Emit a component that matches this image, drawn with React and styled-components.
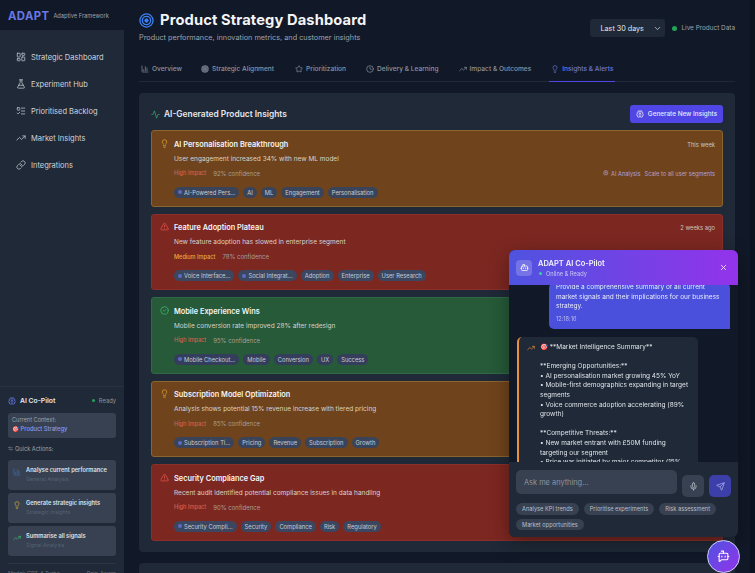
import React from 'react';
import styled, { createGlobalStyle } from 'styled-components';
import {
  LayoutDashboard, FlaskConical, ListTodo, TrendingUp, Link, Brain, ChartColumn, Star, Clock,
  Lightbulb, Activity, TriangleAlert, CircleCheck, Bot, X, Mic, Send, BotMessageSquare, ArrowLeftRight, ChevronDown,
} from 'lucide-react';

const Global = createGlobalStyle`
  html, body { margin: 0; padding: 0; background: #111827; }
  * { box-sizing: border-box; }
  #root { font-family: Inter, "Noto Sans", sans-serif; }
`;

const Page = styled.div`
  width: 755px; height: 573px; overflow: hidden; display: flex; background: #111827; color: #e5e7eb;
`;
const Sidebar = styled.aside`
  width: 124px; flex: none; display: flex; flex-direction: column; background: #1f2937; height: 573px; overflow: hidden;
`;
const Brand = styled.div`
  height: 30px; flex: none; background: #111827; display: flex; align-items: center; gap: 4px; padding: 1px 8px 0 8px;
`;
const Logo = styled.span`
  font-size: 11.3px; font-weight: 700; color: #6878e6; letter-spacing: .4px;
`;
const BrandSub = styled.span`font-size: 5.7px; color: #9ca3af;`;
const Nav = styled.nav`
  display: flex; flex-direction: column; padding: 13.5px 0 0 16px; height: 356px; flex: none;
`;
const NavItem = styled.div`
  height: 27px; display: flex; align-items: center; gap: 5px; font-size: 7.5px; color: #d1d5db;
  svg { width: 10px; height: 10px; color: #b6bcc6; flex: none; }
`;
const Copilot = styled.div`
  border-top: 1px solid #27323f; padding: 8px 8px 0; display: flex; flex-direction: column; margin-top: 0;
`;
const CopilotHead = styled.div`
  display: flex; align-items: center; justify-content: space-between; height: 11px; padding-right: 0;
`;
const CopilotTitle = styled.div`
  display: flex; align-items: center; gap: 4px; font-size: 6.8px; font-weight: 600; color: #e5e7eb;
  svg { width: 8px; height: 8px; color: #6878e6; }
`;
const Ready = styled.div`
  display: flex; align-items: center; gap: 4px; font-size: 5.8px; color: #8b95a3;
`;
const Dot = styled.i`
  display: block; width: ${p => p.$s || 3}px; height: ${p => p.$s || 3}px; border-radius: 50%; background: ${p => p.$c || '#22a35a'}; flex: none;
`;
const ContextBox = styled.div`
  margin-top: 7px; height: 25px; border-radius: 3px; background: #374151; padding: 4px 4px; display: flex; flex-direction: column; gap: 2px;
`;
const ContextLabel = styled.span`font-size: 5.6px; color: #9ca3af;`;
const ContextValue = styled.span`font-size: 5.8px; font-weight: 500; color: #8c9bee;`;
const QuickLabel = styled.div`
  margin-top: 6px; height: 9px; display: flex; align-items: center; gap: 2px; font-size: 5.6px; color: #9ca3af;
  svg { width: 5px; height: 5px; }
`;
const Quick = styled.div`
  margin-top: ${p => p.$first ? 7 : 3}px; height: 30px; border-radius: 3px; background: #374151; padding: 5.5px 5px; display: flex; gap: 5px;
  svg { width: 8px; height: 8px; margin-top: 2px; flex: none; color: ${p => p.$c}; }
`;
const QuickText = styled.div`display: flex; flex-direction: column; gap: 3px;`;
const QuickTitle = styled.span`font-size: 5.7px; font-weight: 600; color: #dfe3e9; white-space: nowrap;`;
const QuickSub = styled.span`font-size: 5.4px; color: #566172;`;
const ModelRow = styled.div`
  margin-top: 7px; border-top: 1px solid #2a3544; padding-top: 6px; display: flex; justify-content: space-between; font-size: 5.4px; color: #6b7280;
`;

const Main = styled.main`
  flex: 1; min-width: 0; display: flex; flex-direction: column; padding: 0 20px 0 15px; height: 573px; overflow: hidden; position: relative;
`;
const ScrollTrack = styled.div`
  position: absolute; right: 0; top: 0; bottom: 0; width: 5px; background: #0c1320;
`;
const Header = styled.header`
  display: flex; justify-content: space-between; align-items: flex-start; height: 59px; flex: none; padding-top: 11px;
`;
const TitleRow = styled.div`display: flex; align-items: center; gap: 6px; padding-left: 0; height: 19px;`;
const Title = styled.h1`margin: 0; font-size: 14.7px; font-weight: 700; color: #f3f4f6; line-height: 19px; letter-spacing: .12px;`;
const Subtitle = styled.p`margin: 3px 0 0; font-size: 7.3px; line-height: 10px; color: #9ca3af;`;
const Controls = styled.div`display: flex; align-items: center; gap: 7px; margin-top: 8px;`;
const Select = styled.div`
  width: 75px; height: 18px; border-radius: 3px; background: #1f2937; display: flex; align-items: center; justify-content: space-between;
  padding: 0 3px 0 10px; font-size: 7.2px; color: #e5e7eb;
  svg { width: 9px; height: 9px; color: #cbd5e1; }
`;
const Live = styled.div`display: flex; align-items: center; gap: 4px; font-size: 6.4px; color: #9ca3af; white-space: nowrap;`;
const Tabs = styled.div`
  display: flex; height: 23px; flex: none; border-bottom: 1px solid #1f2937; padding-left: 0;
`;
const Tab = styled.div`
  display: flex; align-items: center; gap: 3px; height: 23px; padding: 0 2px 2px 2px; margin-right: ${p => p.$mr}px; font-size: 6.6px; font-weight: 500;
  color: ${p => p.$active ? '#6c79dc' : '#8b95a3'}; white-space: nowrap;
  border-bottom: 1px solid ${p => p.$active ? '#4f46e5' : 'transparent'};
  svg { width: 8px; height: 8px; flex: none; }
`;
const Panel = styled.section`
  margin-top: 11px; height: 459px; flex: none; border-radius: 4px; background: #1f2937; padding: 12px 12px 0 12px; display: flex; flex-direction: column;
`;
const PanelHead = styled.div`
  display: flex; justify-content: space-between; align-items: center; height: 18px; margin-bottom: 7px;
`;
const PanelTitle = styled.h2`
  margin: 0; display: flex; align-items: center; gap: 4px; font-size: 8.4px; font-weight: 600; color: #e5e7eb;
  svg { width: 9px; height: 9px; color: #34a862; }
`;
const GenButton = styled.div`
  width: 93px; height: 18px; border-radius: 3px; background: #4f46e5; display: flex; align-items: center; justify-content: center; gap: 4px;
  font-size: 6.4px; font-weight: 500; color: #e8e9fb;
  svg { width: 8px; height: 8px; }
`;
const Cards = styled.div`display: flex; flex-direction: column; gap: 7px;`;
const COL = {
  orange: { bg: '#6f441c', bd: '#8a6530', ic: '#e0a030', tag: '#39445a' },
  red: { bg: '#7d2721', bd: '#8a2f29', ic: '#e4534c', tag: '#3b4660' },
  green: { bg: '#265a38', bd: '#2e6b44', ic: '#3fb970', tag: '#343e5c' },
};
const Card = styled.article`
  height: 76.5px; flex: none; border-radius: 3px; border: 1px solid ${p => COL[p.$k].bd}; background: ${p => COL[p.$k].bg};
  padding: 7.5px 7px 0 8px; display: flex; gap: 5px;
  > svg { width: 9px; height: 9px; margin-top: 0; flex: none; color: ${p => COL[p.$k].ic}; }
`;
const CardBody = styled.div`flex: 1; min-width: 0; display: flex; flex-direction: column;`;
const CardTop = styled.div`display: flex; justify-content: space-between; align-items: center; height: 11px;`;
const CardTitle = styled.h3`margin: 0; font-size: 7.37px; font-weight: 600; color: #f3f4f6; white-space: nowrap;`;
const Time = styled.span`font-size: 5.8px; color: #cbc4ba;`;
const CardDesc = styled.p`margin: 5px 0 0; font-size: 6.5px; line-height: 9px; color: #d6d3cf; white-space: nowrap;`;
const MetaRow = styled.div`display: flex; justify-content: space-between; align-items: center; margin-top: 5px; height: 9px;`;
const Meta = styled.div`display: flex; gap: 7px; font-size: 5.6px; align-items: center;`;
const Impact = styled.span`color: ${p => p.$med ? '#f0a63a' : '#d2604f'}; font-weight: 500;`;
const Conf = styled.span`color: #a59f98; font-size: 6px;`;
const Analysis = styled.div`
  display: flex; align-items: center; gap: 2px; font-size: 5.7px; color: #b49fd0;
  svg { width: 5.5px; height: 5.5px; }
  span + span { margin-left: 2px; }
`;
const TagRow = styled.div`display: flex; gap: 4px; margin-top: 9px;`;
const Tag = styled.span`
  height: 11px; border-radius: 6px; padding: 0 4px; display: flex; align-items: center; gap: 2px; font-size: 5.8px; color: #c5ccd6; white-space: nowrap;
  background: ${p => COL[p.$k].tag};
`;
const NextPanel = styled.section`margin-top: 11px; height: 40px; flex: none; border-radius: 4px; background: #1f2937;`;

const Chat = styled.aside`
  position: fixed; left: 509px; top: 250px; width: 229px; height: 287px; border-radius: 6px; overflow: hidden; display: flex; flex-direction: column;
  background: #111827; box-shadow: 0 6px 20px rgba(0,0,0,.35);
`;
const ChatHead = styled.div`
  height: 35px; flex: none; background: linear-gradient(90deg, #4f53e0, #9333ea); display: flex; align-items: center; padding: 0 10px 0 7px; gap: 6px; position: relative; z-index: 1;
`;
const BotBox = styled.div`
  width: 16px; height: 16px; border-radius: 4px; background: rgba(255,255,255,.2); display: flex; align-items: center; justify-content: center;
  svg { width: 9px; height: 9px; color: #fff; }
`;
const ChatTitles = styled.div`flex: 1; display: flex; flex-direction: column; gap: 2px;`;
const ChatTitle = styled.span`font-size: 7.5px; font-weight: 600; color: #f4f3fe;`;
const ChatState = styled.span`display: flex; align-items: center; gap: 4px; padding-left: 1px; font-size: 5.7px; color: #c9c8f2;`;
const CloseBtn = styled(X)`width: 9px; height: 9px; color: #fff;`;
const Messages = styled.div`flex: 1; min-height: 0; overflow: hidden; display: flex; flex-direction: column; padding: 0 8px;`;
const UserMsg = styled.div`
  align-self: flex-end; width: 181px; flex: none; margin-top: -2px; background: #4a50dc; border-radius: 5px 5px 0 5px; padding: 0 7px 6px; color: #e8e9fb; font-size: 6.5px; line-height: 9.7px;
`;
const MsgTime = styled.div`font-size: 5.6px; color: #b9bcf3; margin-top: 3px; line-height: 8px;`;
const AiMsg = styled.div`
  width: 181px; flex: none; margin-top: 8px; background: #1f2937; border-left: 2px solid #e8913c; border-radius: 5px; padding: 6px 8px 0 8px; display: flex; gap: 5px; height: 140px;
  > svg { width: 8px; height: 8px; color: #e8913c; flex: none; margin-top: 1px; }
`;
const AiText = styled.div`font-size: 6.5px; line-height: 9.6px; color: #dfe3e9; white-space: pre-wrap;`;
const Composer = styled.div`
  flex: none; height: 75px; background: #1f2937; padding: 8px 7px 0; display: flex; flex-direction: column; position: relative;
`;
const InputRow = styled.div`display: flex; gap: 5px; align-items: flex-start;`;
const Input = styled.div`
  width: 161px; height: 24px; border-radius: 5px; background: #374151; padding: 0 8px; display: flex; align-items: center; font-size: 7.4px; color: #8d96a3;
`;
const RoundBtn = styled.div`
  width: 22px; height: 22px; margin-top: 5px; border-radius: 5px; background: ${p => p.$primary ? '#3d3fa8' : '#374151'}; display: flex; align-items: center; justify-content: center;
  svg { width: 9px; height: 9px; color: ${p => p.$primary ? '#a8acef' : '#c3c9d2'}; }
`;
const Chips = styled.div`display: flex; flex-wrap: wrap; gap: 4px 5px; margin-top: 6px;`;
const Chip = styled.span`
  height: 11.5px; border-radius: 6px; background: #374151; padding: 0 6px; display: flex; align-items: center; font-size: 5.7px; color: #b7bec8; white-space: nowrap;
`;
const Fab = styled.div`
  position: fixed; left: 707px; top: 540px; width: 33px; height: 33px; border-radius: 50%; background: linear-gradient(135deg, #4f53e0, #9333ea);
  border: 1px solid #cfd3f7; display: flex; align-items: center; justify-content: center; z-index: 3;
  svg { width: 13px; height: 13px; color: #fff; }
`;
const TargetSvg = styled.svg`width: 15px; height: 15px; flex: none;`;
const TabDisc = styled.svg`width: 8px; height: 8px; flex: none;`;

const NAV = [
  [LayoutDashboard, 'Strategic Dashboard'], [FlaskConical, 'Experiment Hub'], [ListTodo, 'Prioritised Backlog'],
  [TrendingUp, 'Market Insights'], [Link, 'Integrations'],
];
const CARDS = [
  { k: 'orange', I: Lightbulb, t: 'AI Personalisation Breakthrough', d: 'User engagement increased 34% with new ML model', w: 'This week', c: '92%', tags: [['AI-Powered Pers...', 1], ['AI'], ['ML'], ['Engagement'], ['Personalisation']], a: true },
  { k: 'red', I: TriangleAlert, t: 'Feature Adoption Plateau', d: 'New feature adoption has slowed in enterprise segment', w: '2 weeks ago', c: '78%', med: true, tags: [['Voice Interface...', 1], ['Social Integrat...', 1], ['Adoption'], ['Enterprise'], ['User Research']] },
  { k: 'green', I: CircleCheck, t: 'Mobile Experience Wins', d: 'Mobile conversion rate improved 28% after redesign', w: '', c: '95%', tags: [['Mobile Checkout...', 1], ['Mobile'], ['Conversion'], ['UX'], ['Success']] },
  { k: 'orange', I: Lightbulb, t: 'Subscription Model Optimization', d: 'Analysis shows potential 15% revenue increase with tiered pricing', w: '', c: '85%', tags: [['Subscription Ti...', 1], ['Pricing'], ['Revenue'], ['Subscription'], ['Growth']] },
  { k: 'red', I: TriangleAlert, t: 'Security Compliance Gap', d: 'Recent audit identified potential compliance issues in data handling', w: '', c: '90%', tags: [['Security Compli...', 1], ['Security'], ['Compliance'], ['Risk'], ['Regulatory']] },
];
const AI_TEXT = `🎯 **Market Intelligence Summary**

**Emerging Opportunities:**
• AI personalisation market growing 45% YoY
• Mobile-first demographics expanding in target segments
• Voice commerce adoption accelerating (89% growth)

**Competitive Threats:**
• New market entrant with £50M funding targeting our segment
• Price war initiated by major competitor (15% price reduction)`;

export default function App() {
  return (
    <Page>
      <Global />
      <Sidebar>
        <Brand><Logo>ADAPT</Logo><BrandSub>Adaptive Framework</BrandSub></Brand>
        <Nav>
          {NAV.map(([I, l]) => <NavItem key={l}><I />{l}</NavItem>)}
        </Nav>
        <Copilot>
          <CopilotHead>
            <CopilotTitle><Brain />AI Co-Pilot</CopilotTitle>
            <Ready><Dot />Ready</Ready>
          </CopilotHead>
          <ContextBox>
            <ContextLabel>Current Context:</ContextLabel>
            <ContextValue>🎯 Product Strategy</ContextValue>
          </ContextBox>
          <QuickLabel><ArrowLeftRight />Quick Actions:</QuickLabel>
          <Quick $first $c="#3f6fb5"><ChartColumn /><QuickText><QuickTitle>Analyse current performance</QuickTitle><QuickSub>General Analysis</QuickSub></QuickText></Quick>
          <Quick $c="#e0b030"><Lightbulb /><QuickText><QuickTitle>Generate strategic insights</QuickTitle><QuickSub>Strategic Insights</QuickSub></QuickText></Quick>
          <Quick $c="#3fb970"><TrendingUp /><QuickText><QuickTitle>Summarise all signals</QuickTitle><QuickSub>Signal Analysis</QuickSub></QuickText></Quick>
          <ModelRow><span>Model: GPT-4 Turbo</span><span>Role-Aware</span></ModelRow>
        </Copilot>
      </Sidebar>
      <Main>
        <ScrollTrack />
        <Header>
          <div>
            <TitleRow>
              <TargetSvg viewBox="0 0 16 16" fill="none" stroke="#3b82f6">
                <circle cx="8" cy="8" r="7" strokeWidth="1.4" />
                <circle cx="8" cy="8" r="4.4" strokeWidth="1.4" />
                <circle cx="8" cy="8" r="1.8" fill="#3b82f6" strokeWidth="1" />
              </TargetSvg>
              <Title>Product Strategy Dashboard</Title>
            </TitleRow>
            <Subtitle>Product performance, innovation metrics, and customer insights</Subtitle>
          </div>
          <Controls>
            <Select>Last 30 days<ChevronDown /></Select>
            <Live><Dot $s={5} />Live Product Data</Live>
          </Controls>
        </Header>
        <Tabs>
          <Tab $mr={15}><ChartColumn />Overview</Tab>
          <Tab $mr={17}>
            <TabDisc viewBox="0 0 16 16"><circle cx="8" cy="8" r="7.5" fill="#6b7280" /><circle cx="8" cy="8" r="4.5" fill="none" stroke="#4b5563" /></TabDisc>
            Strategic Alignment
          </Tab>
          <Tab $mr={16}><Star />Prioritization</Tab>
          <Tab $mr={16}><Clock />Delivery &amp; Learning</Tab>
          <Tab $mr={16}><TrendingUp />Impact &amp; Outcomes</Tab>
          <Tab $mr={0} $active><Lightbulb />Insights &amp; Alerts</Tab>
        </Tabs>
        <Panel>
          <PanelHead>
            <PanelTitle><Activity />AI-Generated Product Insights</PanelTitle>
            <GenButton><Brain />Generate New Insights</GenButton>
          </PanelHead>
          <Cards>
            {CARDS.map(c => (
              <Card key={c.t} $k={c.k}>
                <c.I />
                <CardBody>
                  <CardTop><CardTitle>{c.t}</CardTitle><Time>{c.w}</Time></CardTop>
                  <CardDesc>{c.d}</CardDesc>
                  <MetaRow>
                    <Meta><Impact $med={c.med}>{c.med ? 'Medium' : 'High'} Impact</Impact><Conf>{c.c} confidence</Conf></Meta>
                    {c.a && <Analysis><Brain /><span>AI Analysis</span><span>Scale to all user segments</span></Analysis>}
                  </MetaRow>
                  <TagRow>
                    {c.tags.map(([l, dot]) => <Tag key={l} $k={c.k}>{dot && <Dot $s={4} $c="#5b6bc0" />}{l}</Tag>)}
                  </TagRow>
                </CardBody>
              </Card>
            ))}
          </Cards>
        </Panel>
        <NextPanel />
      </Main>
      <Chat>
        <ChatHead>
          <BotBox><Bot /></BotBox>
          <ChatTitles>
            <ChatTitle>ADAPT AI Co-Pilot</ChatTitle>
            <ChatState><Dot $c="#34d399" />Online &amp; Ready</ChatState>
          </ChatTitles>
          <CloseBtn />
        </ChatHead>
        <Messages>
          <UserMsg>
            Provide a comprehensive summary of all current market signals and their implications for our business strategy.
            <MsgTime>12:18:16</MsgTime>
          </UserMsg>
          <AiMsg><TrendingUp /><AiText>{AI_TEXT}</AiText></AiMsg>
        </Messages>
        <Composer>
          <InputRow>
            <Input>Ask me anything...</Input>
            <RoundBtn><Mic /></RoundBtn>
            <RoundBtn $primary><Send /></RoundBtn>
          </InputRow>
          <Chips>
            <Chip>Analyse KPI trends</Chip><Chip>Prioritise experiments</Chip><Chip>Risk assessment</Chip><Chip>Market opportunities</Chip>
          </Chips>
        </Composer>
      </Chat>
      <Fab><BotMessageSquare /></Fab>
    </Page>
  );
}
